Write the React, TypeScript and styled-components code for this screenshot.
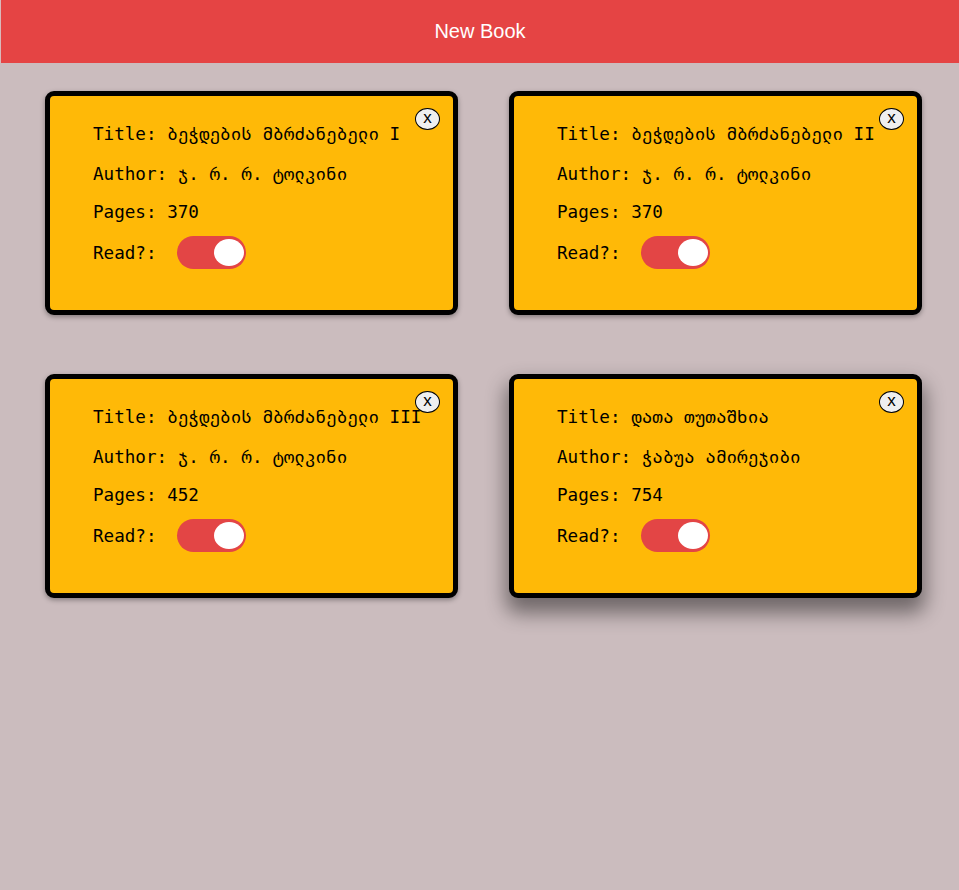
import React, { useState } from "react";
import styled, { createGlobalStyle } from "styled-components";

const Global = createGlobalStyle`
  html, body { margin: 0; padding: 0; }
  body {
    background: #cbbcbe;
    min-height: 890px;
    font-family: "DejaVu Sans Mono", "Liberation Mono", monospace;
  }
`;

const Header = styled.button`
  display: block;
  width: 100%;
  height: 63px;
  margin: 0;
  padding: 0;
  border: none;
  border-left: 1px solid #d9b9bb;
  background: #e54444;
  color: #ffffff;
  font-family: "Liberation Sans", Arial, sans-serif;
  font-size: 20px;
  cursor: pointer;
`;

const Library = styled.main`
  display: grid;
  grid-template-columns: 413px 413px;
  column-gap: 51px;
  row-gap: 59px;
  padding: 28px 0 40px 45px;
`;

const Card = styled.section<{ $lifted?: boolean }>`
  position: relative;
  box-sizing: border-box;
  height: 224px;
  background: #ffb907;
  border: 5px solid #000;
  border-radius: 9px;
  padding: 27px 20px 0 43px;
  display: flex;
  flex-direction: column;
  box-shadow: ${(p) =>
    p.$lifted
      ? "0 12px 20px 3px rgba(0,0,0,0.45)"
      : "0 2px 5px rgba(0,0,0,0.35)"};
`;

const Line = styled.div<{ $gap: number }>`
  height: 22px;
  line-height: 22px;
  font-size: 17.6px;
  color: #000;
  white-space: pre;
  margin-bottom: ${(p) => p.$gap}px;
`;

const ReadRow = styled.div`
  display: flex;
  align-items: center;
  height: 33px;
  gap: 20px;
  font-size: 17.6px;
  color: #000;
`;

const Toggle = styled.div<{ $on: boolean }>`
  position: relative;
  width: 69px;
  height: 33px;
  border-radius: 17px;
  background: ${(p) => (p.$on ? "#e34545" : "#bbb")};
  cursor: pointer;
`;

const Knob = styled.span<{ $on: boolean }>`
  position: absolute;
  top: 3px;
  ${(p) => (p.$on ? "right: 2px;" : "left: 2px;")}
  width: 30px;
  height: 27px;
  border-radius: 50%;
  background: #ffffff;
`;

const Close = styled.button`
  position: absolute;
  top: 12px;
  right: 13px;
  width: 25px;
  height: 22px;
  padding: 0 0 3px 0;
  border: 1px solid #000;
  border-radius: 50%;
  background: #efefef;
  color: #000;
  font-family: "Liberation Sans", Arial, sans-serif;
  font-size: 17px;
  line-height: 16px;
  cursor: pointer;
`;

type Book = { title: string; author: string; pages: number; read: boolean };

const initial: Book[] = [
  { title: "ბეჭდების მბრძანებელი I", author: "ჯ. რ. რ. ტოლკინი", pages: 370, read: true },
  { title: "ბეჭდების მბრძანებელი II", author: "ჯ. რ. რ. ტოლკინი", pages: 370, read: true },
  { title: "ბეჭდების მბრძანებელი III", author: "ჯ. რ. რ. ტოლკინი", pages: 452, read: true },
  { title: "დათა თუთაშხია", author: "ჭაბუა ამირეჯიბი", pages: 754, read: true },
];

export default function App() {
  const [books, setBooks] = useState(initial);
  return (
    <>
      <Global />
      <Header>New Book</Header>
      <Library>
        {books.map((b, i) => (
          <Card key={i} $lifted={i === 3}>
            <Close onClick={() => setBooks(books.filter((_, j) => j !== i))}>
              x
            </Close>
            <Line $gap={18}>Title: {b.title}</Line>
            <Line $gap={16}>Author: {b.author}</Line>
            <Line $gap={13}>Pages: {b.pages}</Line>
            <ReadRow>
              Read?:
              <Toggle
                $on={b.read}
                onClick={() =>
                  setBooks(books.map((x, j) => (j === i ? { ...x, read: !x.read } : x)))
                }
              >
                <Knob $on={b.read} />
              </Toggle>
            </ReadRow>
          </Card>
        ))}
      </Library>
    </>
  );
}
